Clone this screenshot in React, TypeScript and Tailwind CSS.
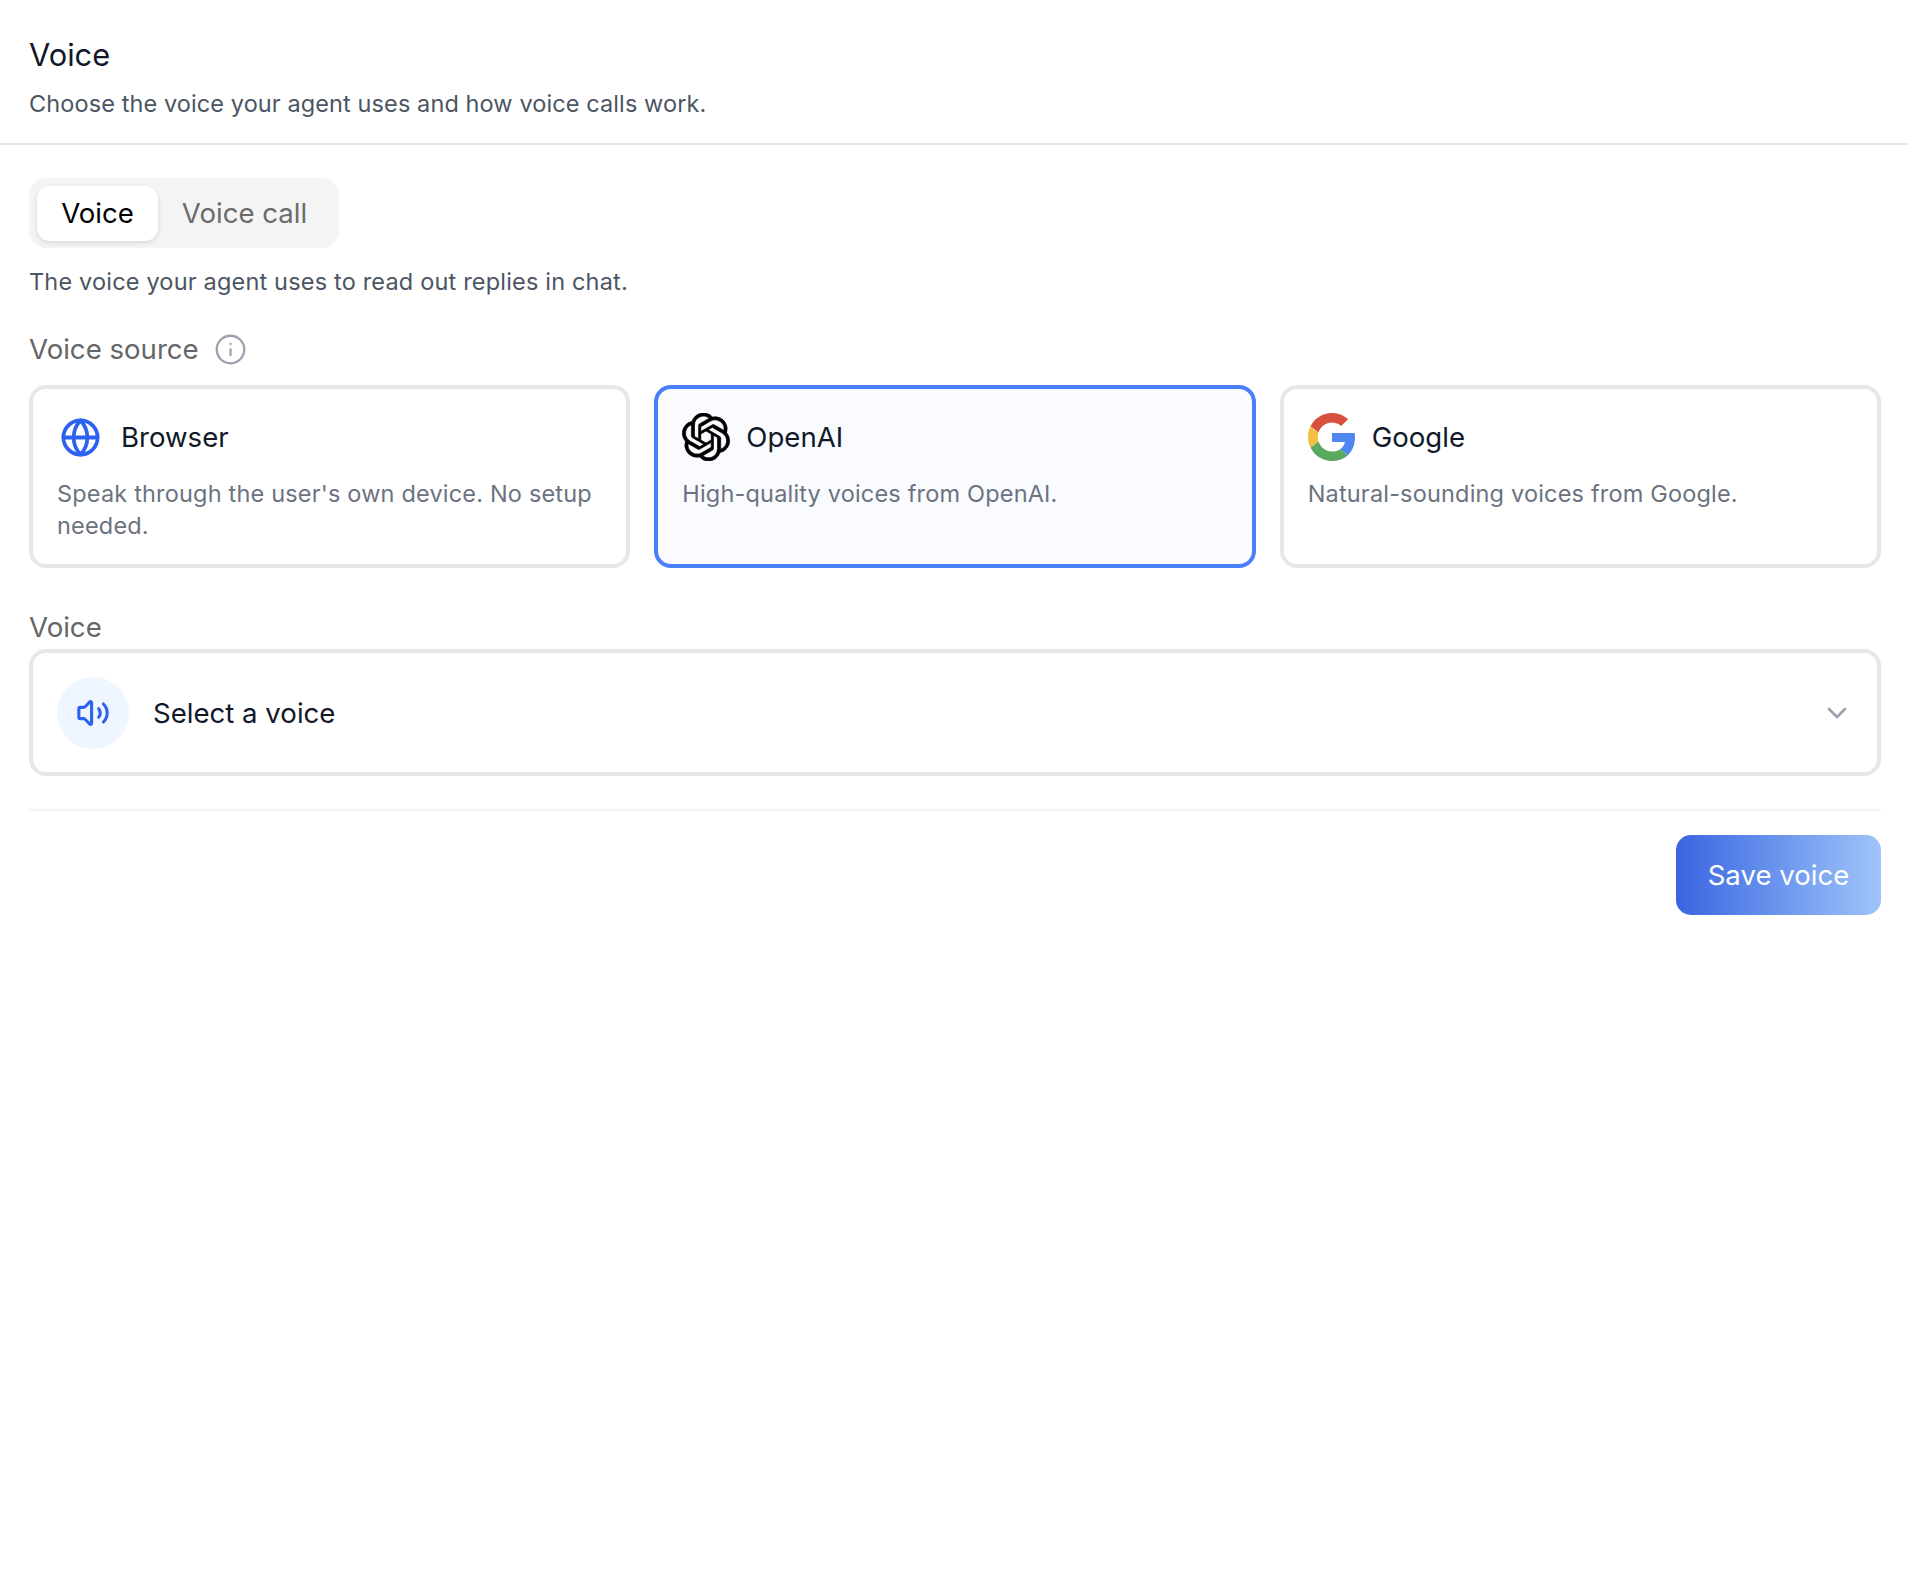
import React from 'react';
import { ChevronDown, Globe, Info, Volume2 } from 'lucide-react';
import { SiOpenai } from 'react-icons/si';

const GoogleLogo = () => (
  <svg width="48" height="48" viewBox="0 0 48 48" className="shrink-0">
    <path fill="#D9503F" d="M24 9.5c3.54 0 6.71 1.22 9.21 3.6l6.85-6.85C35.9 2.38 30.47 0 24 0 14.62 0 6.51 5.38 2.56 13.22l7.98 6.19C12.43 13.72 17.74 9.5 24 9.5z" />
    <path fill="#4F86F0" d="M46.98 24.55c0-1.57-.15-3.09-.38-4.55H24v9.02h12.94c-.58 2.96-2.26 5.48-4.78 7.18l7.73 6c4.51-4.18 7.09-10.36 7.09-17.65z" />
    <path fill="#F4C042" d="M10.53 28.59c-.48-1.45-.76-2.99-.76-4.59s.27-3.14.76-4.59l-7.98-6.19C.92 16.46 0 20.12 0 24c0 3.88.92 7.54 2.56 10.78l7.97-6.19z" />
    <path fill="#5BA95E" d="M24 48c6.48 0 11.93-2.13 15.89-5.81l-7.73-6c-2.15 1.45-4.92 2.3-8.16 2.3-6.26 0-11.57-4.22-13.47-9.91l-7.98 6.19C6.51 42.62 14.62 48 24 48z" />
  </svg>
);

const SourceCard = ({
  icon,
  title,
  desc,
  selected,
}: {
  icon: React.ReactNode;
  title: string;
  desc: string;
  selected?: boolean;
}) => (
  <div
    className={`flex h-[183px] flex-1 flex-col rounded-[17px] border-4 px-6 pt-[24px] ${
      selected ? 'border-[#4a7ffa] bg-[#fafbff]' : 'border-[#e5e7eb] bg-white'
    }`}
  >
    <div className="flex h-12 items-center">
      {icon}
      <span className="text-[27.6px] font-normal leading-9 text-[#111827]">{title}</span>
    </div>
    <p className="mt-[17px] text-[23.5px] leading-8 tracking-[0.18px] text-[#6b7280]">{desc}</p>
  </div>
);

export default function App() {
  return (
    <div className="h-[1588px] w-[1908px] bg-white font-['Inter',sans-serif]">
      {/* Header */}
      <div className="h-[145px] border-b-2 border-[#e5e7eb] px-[29px] pt-[37px]">
        <h1 className="text-[30.8px] font-normal leading-9 text-[#111827]">Voice</h1>
        <p className="mt-[15px] text-[23.5px] leading-8 tracking-[0.1px] text-[#4b5563]">
          Choose the voice your agent uses and how voice calls work.
        </p>
      </div>

      <div className="flex flex-col pl-[29px] pr-[27px] pt-[33px]">
        {/* Tabs */}
        <div className="flex h-[70px] w-[310px] items-center rounded-[17px] bg-[#f4f4f5] px-2">
          <div className="flex h-[55px] w-[121px] items-center justify-center rounded-[13px] bg-white pt-0.5 text-[27.6px] font-normal text-black shadow-[0_2px_5px_rgba(0,0,0,0.12)]">
            Voice
          </div>
          <div className="flex h-[55px] w-[173px] items-center justify-center pt-0.5 text-[27.6px] text-[#6b6b6b]">
            Voice call
          </div>
        </div>

        <p className="mt-[18px] text-[23.5px] leading-8 tracking-[0.18px] text-[#4b5563]">
          The voice your agent uses to read out replies in chat.
        </p>

        <div className="mt-[33px] flex h-9 items-center">
          <span className="pt-0.5 text-[27.6px] text-[#666666]">Voice source</span>
          <Info size={33} strokeWidth={1.7} className="ml-[15px] text-[#9ca3af]" />
        </div>

        {/* Source cards */}
        <div className="mt-[18px] flex gap-6">
          <SourceCard
            icon={<Globe size={41} strokeWidth={2.2} className="ml-[3px] mr-5 shrink-0 text-[#2d62f0]" />}
            title="Browser"
            desc="Speak through the user's own device. No setup needed."
          />
          <SourceCard
            selected
            icon={<SiOpenai size={48} strokeWidth={0.35} className="mr-4 shrink-0 text-black" />}
            title="OpenAI"
            desc="High-quality voices from OpenAI."
          />
          <SourceCard
            icon={
              <span className="mr-4">
                <GoogleLogo />
              </span>
            }
            title="Google"
            desc="Natural-sounding voices from Google."
          />
        </div>

        <div className="mt-[43px] text-[27.6px] leading-8 text-[#666666]">Voice</div>

        {/* Voice select */}
        <div className="mt-1.5 flex h-[127px] items-center rounded-[17px] border-4 border-[#e5e7eb] bg-white pl-6 pr-6">
          <div className="flex h-[72px] w-[72px] items-center justify-center rounded-full bg-[#eff6ff]">
            <Volume2 size={34} strokeWidth={2.2} className="text-[#2d62f0]" />
          </div>
          <span className="ml-6 flex-1 pt-0.5 text-[27.6px] font-normal text-[#111827]">Select a voice</span>
          <ChevronDown size={32} strokeWidth={2} className="text-[#9ca3af]" />
        </div>

        <div className="mt-[33px] h-0.5 bg-[#f3f4f6]" />

        <div className="mt-6 flex justify-end">
          <button className="h-20 w-[205px] rounded-[15px] bg-gradient-to-r from-[#3b63e0] to-[#a0c4f8] pt-0.5 text-[27.6px] font-normal text-white">
            Save voice
          </button>
        </div>
      </div>
    </div>
  );
}
